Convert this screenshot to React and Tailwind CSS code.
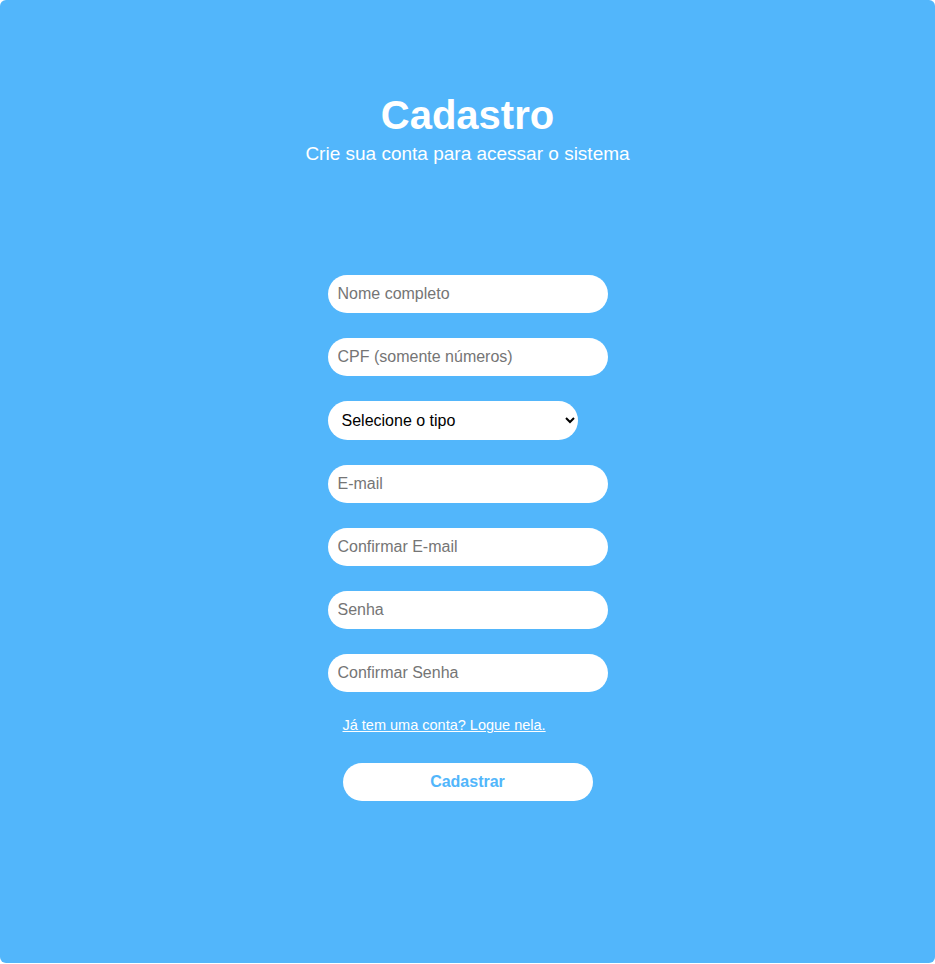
export default function App() {
  const campos = [
    "Nome completo",
    "CPF (somente números)",
    null,
    "E-mail",
    "Confirmar E-mail",
    "Senha",
    "Confirmar Senha",
  ];

  return (
    <div className="w-[935px] h-[963px] bg-[#52b6fb] rounded-[6px] font-['Liberation_Sans',Arial,sans-serif] text-white">
      <div className="pt-[92px] flex flex-col items-center">
        <h1 className="text-[40px] leading-[46px] font-bold">Cadastro</h1>
        <p className="mt-[5px] text-[19px] leading-[22px]">Crie sua conta para acessar o sistema</p>
      </div>

      <form className="w-[280px] mx-auto mt-[110px] flex flex-col gap-[25px]" onSubmit={e => e.preventDefault()}>
        {campos.map((c, i) =>
          c ? (
            <input
              key={i}
              type="text"
              placeholder={c}
              className="w-[280px] h-[38px] rounded-full bg-white px-[10px] text-[16px] text-black placeholder:text-[#757575] outline-none"
            />
          ) : (
            <select
              key={i}
              defaultValue=""
              className="w-[250px] h-[39px] rounded-full bg-white pl-[10px] pr-[2px] text-[16px] text-black outline-none appearance-auto"
            >
              <option value="" disabled>Selecione o tipo</option>
              <option>Aluno</option>
              <option>Professor</option>
            </select>
          )
        )}
        <a href="#" className="ml-[15px] mt-0 text-[14.5px] leading-[16px] underline text-white self-start">
          Já tem uma conta? Logue nela.
        </a>
        <button type="submit" className="ml-[15px] mt-[5px] w-[250px] h-[38px] rounded-full bg-white text-[#52b6fb] font-bold text-[16px]">
          Cadastrar
        </button>
      </form>
    </div>
  );
}
